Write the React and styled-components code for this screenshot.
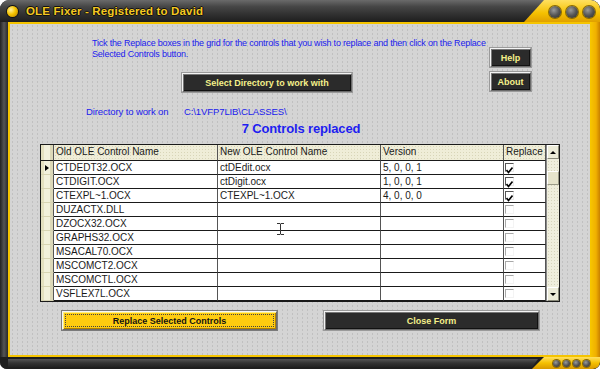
import styled, { createGlobalStyle } from "styled-components";

const GlobalStyle = createGlobalStyle`
  html, body {
    margin: 0;
    padding: 0;
    background: #ffffff;
  }
  * {
    box-sizing: border-box;
  }
`;

const SANS = `"Liberation Sans", Arial, sans-serif`;

const Window = styled.div`
  width: 600px;
  height: 369px;
  display: flex;
  flex-direction: column;
  background: #2c2c2c;
  border-radius: 9px 9px 7px 7px;
  overflow: hidden;
`;

const TitleBar = styled.div`
  height: 22px;
  display: flex;
  align-items: center;
  background: linear-gradient(#6a6a6a 0%, #464646 30%, #2e2e2e 70%, #1e1e1e 100%);
`;

const Lamp = styled.span`
  width: 11px;
  height: 11px;
  margin: 1px 0 0 7px;
  border-radius: 50%;
  background: radial-gradient(circle at 35% 35%, #fff0a0 0%, #f5c400 45%, #b07800 100%);
  box-shadow: 0 0 0 1px #111;
`;

const Title = styled.span`
  margin-left: 8px;
  font-family: ${SANS};
  font-weight: bold;
  font-size: 11.5px;
  letter-spacing: 0.15px;
  color: #f4c820;
  text-shadow: 1px 0 0 #111, -1px 0 0 #111, 0 1px 0 #111, 0 -1px 0 #111;
`;

const Spacer = styled.span`
  flex: 1;
`;

const Corner = styled.div`
  width: 76px;
  height: 22px;
  display: flex;
  align-items: center;
  justify-content: flex-end;
  gap: 5px;
  padding: 1px 5px 0 0;
  background: linear-gradient(#ffe060, #f5c000 60%, #e0a000);
  clip-path: polygon(20px 0, 100% 0, 100% 100%, 0 100%);
  border-top-right-radius: 9px;
`;

const Knob = styled.span`
  width: ${(p) => p.size}px;
  height: ${(p) => p.size}px;
  border-radius: 50%;
  background: radial-gradient(circle at 40% 35%, #9a9a9a 0%, #555 50%, #2a2a2a 100%);
  box-shadow: 0 0 0 1px #8a6a00;
`;

const Middle = styled.div`
  flex: 1;
  display: flex;
`;

const LeftRail = styled.div`
  width: 8px;
  background: linear-gradient(to right, #222, #555 50%, #2a2a2a);
`;

const RightRail = styled.div`
  width: 10px;
  background: linear-gradient(to right, #f8c800, #f0b000 60%, #c88000);
`;

const Panel = styled.div`
  flex: 1;
  display: flex;
  flex-direction: column;
  border: 2px solid #f5c400;
  border-right: none;
  background-color: #d4d4d4;
  background-image: radial-gradient(#c0c0c0 0.7px, transparent 0.9px);
  background-size: 5px 4px;
`;

const TopArea = styled.div`
  display: grid;
  grid-template-columns: 396px 41px;
  column-gap: 2px;
  padding: 14px 0 0 82px;
`;

const LeftCol = styled.div`
  display: flex;
  flex-direction: column;
`;

const RightCol = styled.div`
  display: flex;
  flex-direction: column;
  gap: 5px;
  padding-top: 10px;
`;

const Instructions = styled.p`
  margin: 0;
  font-family: ${SANS};
  font-size: 9px;
  letter-spacing: -0.2px;
  line-height: 11px;
  white-space: nowrap;
  color: #2020ee;
`;

const DarkButton = styled.button`
  width: ${(p) => p.w}px;
  height: ${(p) => p.h || 19}px;
  margin: ${(p) => p.m || "0"};
  padding: 0;
  display: flex;
  align-items: center;
  justify-content: center;
  background: #2b2b2b;
  border: 1px solid;
  border-color: #f4f4f4 #6a6a6a #6a6a6a #f4f4f4;
  box-shadow: inset 1px 1px 0 #777, inset -1px -1px 0 #111, 0 0 0 1px #9a9a9a;
  color: #f4f08a;
  font-family: ${SANS};
  font-weight: bold;
  font-size: 9px;
  white-space: nowrap;
  cursor: pointer;
`;

const YellowButton = styled(DarkButton)`
  background: #ffcc10;
  color: #111;
  box-shadow: inset 1px 1px 0 #fff080, inset -1px -1px 0 #b08000, 0 0 0 1px #7a7a7a;
  position: relative;
  &::after {
    content: "";
    position: absolute;
    inset: 2px;
    border: 1px dotted #444;
  }
`;

const DirRow = styled.div`
  display: flex;
  margin: 14px 0 0 76px;
  font-family: ${SANS};
  font-size: 9.5px;
  letter-spacing: -0.1px;
  line-height: 12px;
  white-space: nowrap;
  color: #2020ee;
`;

const DirLabel = styled.span`
  width: 98px;
`;

const Count = styled.div`
  margin: 3px 0 0 2px;
  text-align: center;
  font-family: ${SANS};
  font-weight: bold;
  font-size: 13px;
  letter-spacing: -0.15px;
  line-height: 16px;
  color: #1e1ef0;
`;

const GridBox = styled.div`
  position: relative;
  width: 520px;
  height: 158px;
  margin: 7px 0 0 30px;
  display: flex;
  border: 1px solid #1a1a1a;
  background: #ffffff;
`;

const Table = styled.div`
  flex: 1;
  display: grid;
  grid-template-columns: 13px 164px 163px 123px 42px;
  grid-template-rows: 16px repeat(10, 14px);
`;

const Cell = styled.div`
  border-right: 1px solid #555;
  border-bottom: 1px solid #1a1a1a;
  padding-left: 2px;
  font-family: ${SANS};
  font-size: 10px;
  line-height: 13px;
  color: #1a1a1a;
  white-space: nowrap;
  overflow: hidden;
  background-color: ${(p) => (p.head ? "#efedd8" : "#ffffff")};
  background-image: ${(p) =>
    p.head ? "radial-gradient(#d8d5b8 0.6px, transparent 0.8px)" : "none"};
  background-size: 3px 3px;
`;

const Indicator = styled.div`
  border-right: 1px solid #555;
  border-bottom: 1px solid ${(p) => (p.head ? "#1a1a1a" : "#d8d4b4")};
  background: linear-gradient(to right, #e4e0c0 0 3px, #f2f0dc 3px 9px, #dcd8b8 9px);
  display: flex;
  align-items: center;
  justify-content: center;
`;

const Pointer = styled.span`
  width: 0;
  height: 0;
  border-top: 3px solid transparent;
  border-bottom: 3px solid transparent;
  border-left: 4px solid #000;
`;

const CheckCell = styled(Cell)`
  padding: 2px 0 0 1px;
`;

const Box = styled.span`
  display: block;
  width: 9px;
  height: 9px;
  border: 1px solid;
  border-color: ${(p) => (p.on ? "#555 #e8e8e8 #e8e8e8 #555" : "#a8a8a8 #f4f4f4 #f4f4f4 #a8a8a8")};
  background: #fff;
`;

const ScrollBar = styled.div`
  width: 13px;
  display: flex;
  flex-direction: column;
  border-left: 1px solid #888;
  background-color: #efeedd;
  background-image: radial-gradient(#d6d4bc 0.6px, transparent 0.8px);
  background-size: 3px 3px;
`;

const ScrollBtn = styled.div`
  height: 14px;
  display: flex;
  align-items: center;
  justify-content: center;
  background: #ecebd8;
  border: 1px solid;
  border-color: #fff #8a8a7a #8a8a7a #fff;
`;

const Arrow = styled.span`
  width: 0;
  height: 0;
  border-left: 3px solid transparent;
  border-right: 3px solid transparent;
  ${(p) => (p.up ? "border-bottom: 3px solid #000;" : "border-top: 3px solid #000;")}
`;

const Thumb = styled.div`
  height: 14px;
  margin-top: 12px;
  background: #e6e4cc;
  border: 1px solid;
  border-color: #fff #9a9a88 #9a9a88 #fff;
`;

const Track = styled.div`
  flex: 1;
`;

const Cursor = styled.svg`
  position: absolute;
  left: 235px;
  top: 78px;
`;

const BottomRow = styled.div`
  display: flex;
  gap: 47px;
  margin: 9px 0 0 52px;
`;

const BottomBar = styled.div`
  height: 12px;
  display: flex;
  align-items: stretch;
  background: #1e1e1e;
`;

const BottomStrip = styled.div`
  flex: 1;
  margin: 2px 0 2px 8px;
  background: linear-gradient(#555, #333 50%, #222);
  clip-path: polygon(0 0, 100% 0, calc(100% - 6px) 100%, 0 100%);
`;

const BottomEnd = styled.div`
  width: 68px;
  margin-left: -6px;
  display: flex;
  align-items: center;
  gap: 3px;
  padding-left: 21px;
  background: linear-gradient(#ffe060, #f5c000 50%, #d89800);
  clip-path: polygon(12px 0, 100% 0, 100% 100%, 0 100%);
  border-bottom-right-radius: 7px;
`;

const rows = [
  ["CTDEDT32.OCX", "ctDEdit.ocx", "5, 0, 0, 1", true],
  ["CTDIGIT.OCX", "ctDigit.ocx", "1, 0, 0, 1", true],
  ["CTEXPL~1.OCX", "CTEXPL~1.OCX", "4, 0, 0, 0", true],
  ["DUZACTX.DLL", "", "", false],
  ["DZOCX32.OCX", "", "", false],
  ["GRAPHS32.OCX", "", "", false],
  ["MSACAL70.OCX", "", "", false],
  ["MSCOMCT2.OCX", "", "", false],
  ["MSCOMCTL.OCX", "", "", false],
  ["VSFLEX7L.OCX", "", "", false],
];

function Check({ on }) {
  return (
    <Box on={on}>
      {on && (
        <svg width="7" height="7" viewBox="0 0 7 7">
          <polyline points="0.5,3 2.5,5.5 6.5,0.5" fill="none" stroke="#000" strokeWidth="1.6" />
        </svg>
      )}
    </Box>
  );
}

function Row({ first, oldName, newName, version, on }) {
  return (
    <>
      <Indicator>{first && <Pointer />}</Indicator>
      <Cell>{oldName}</Cell>
      <Cell>{newName}</Cell>
      <Cell>{version}</Cell>
      <CheckCell>
        <Check on={on} />
      </CheckCell>
    </>
  );
}

export default function App() {
  return (
    <>
      <GlobalStyle />
      <Window>
        <TitleBar>
          <Lamp />
          <Title>OLE Fixer - Registered to David</Title>
          <Spacer />
          <Corner>
            <Knob size={12} />
            <Knob size={12} />
            <Knob size={12} />
          </Corner>
        </TitleBar>

        <Middle>
          <LeftRail />
          <Panel>
            <TopArea>
              <LeftCol>
                <Instructions>
                  Tick the Replace boxes in the grid for the controls that you wish to replace and then click on the Replace
                  <br />
                  Selected Controls button.
                </Instructions>
                <DarkButton w={170} m="13px 0 0 90px">
                  Select Directory to work with
                </DarkButton>
              </LeftCol>
              <RightCol>
                <DarkButton w={41}>Help</DarkButton>
                <DarkButton w={41}>About</DarkButton>
              </RightCol>
            </TopArea>

            <DirRow>
              <DirLabel>Directory to work on</DirLabel>
              <span>C:\1VFP7LIB\CLASSES\</span>
            </DirRow>

            <Count>7 Controls replaced</Count>

            <GridBox>
              <Table>
                <Indicator head />
                <Cell head>Old OLE Control Name</Cell>
                <Cell head>New OLE Control Name</Cell>
                <Cell head>Version</Cell>
                <Cell head>Replace</Cell>
                {rows.map(([oldName, newName, version, on], i) => (
                  <Row key={oldName} first={i === 0} oldName={oldName} newName={newName} version={version} on={on} />
                ))}
              </Table>
              <ScrollBar>
                <ScrollBtn>
                  <Arrow up />
                </ScrollBtn>
                <Thumb />
                <Track />
                <ScrollBtn>
                  <Arrow />
                </ScrollBtn>
              </ScrollBar>
              <Cursor width="9" height="12" viewBox="0 0 9 12">
                <path d="M1 0.5h3l0.5 0.5 0.5-0.5h3M4.5 1v10M1 11.5h3l0.5-0.5 0.5 0.5h3" fill="none" stroke="#333" strokeWidth="1" />
              </Cursor>
            </GridBox>

            <BottomRow>
              <YellowButton w={215}>Replace Selected Controls</YellowButton>
              <DarkButton w={215}>Close Form</DarkButton>
            </BottomRow>
          </Panel>
          <RightRail />
        </Middle>

        <BottomBar>
          <BottomStrip />
          <BottomEnd>
            <Knob size={7} />
            <Knob size={7} />
            <Knob size={7} />
            <Knob size={7} />
          </BottomEnd>
        </BottomBar>
      </Window>
    </>
  );
}
